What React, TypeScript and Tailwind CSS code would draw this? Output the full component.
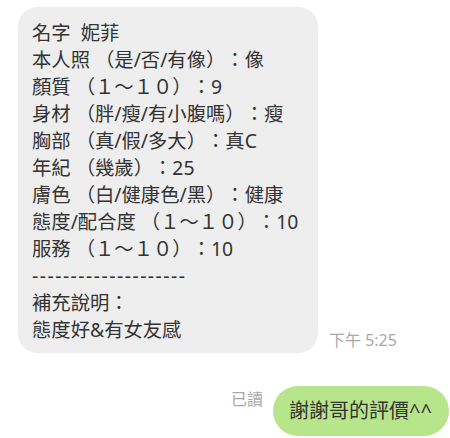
import React from "react";

const lines = [
  "名字  妮菲",
  "本人照 （是/否/有像）：像",
  "顏質 （１～１０）：9",
  "身材 （胖/瘦/有小腹嗎）：瘦",
  "胸部 （真/假/多大）：真C",
  "年紀 （幾歲）：25",
  "膚色 （白/健康色/黑）：健康",
  "態度/配合度 （１～１０）：10",
  "服務 （１～１０）：10",
  "--------------------",
  "補充說明：",
  "態度好&有女友感",
];

const font = {
  fontFamily: '"Noto Sans", "Noto Sans CJK TC", sans-serif',
};

export default function App() {
  return (
    <div
      className="w-[450px] h-[438px] bg-white overflow-hidden [text-spacing-trim:space-all]"
      style={font}
    >
      <div className="flex items-end pt-[7px] pl-[18px]">
        <div className="w-[300px] shrink-0 rounded-[20px] bg-[#eeeeee] pl-[14px] pt-[12px] pb-[10px] text-[19.33px] leading-[27px] text-[#333333] whitespace-pre">
          {lines.map((l, i) => (
            <div key={i} className={l.startsWith("-") ? "tracking-[1.5px]" : ""}>
              {l}
            </div>
          ))}
        </div>
        <div className="ml-[11px] mb-[2px] text-[16px] leading-[22px] text-[#a8a8a8] whitespace-nowrap">
          下午 5:25
        </div>
      </div>
      <div className="flex justify-end items-start mt-[33px] pr-[1px]">
        <div className="mt-[2px] mr-[10px] text-[16px] leading-[22px] text-[#a8a8a8]">
          已讀
        </div>
        <div className="h-[50px] flex items-center rounded-[25px] bg-[#b7e58c] pl-[16px] pr-[17px] text-[20px] text-[#333333] whitespace-nowrap">
          謝謝哥的評價^^
        </div>
      </div>
    </div>
  );
}
